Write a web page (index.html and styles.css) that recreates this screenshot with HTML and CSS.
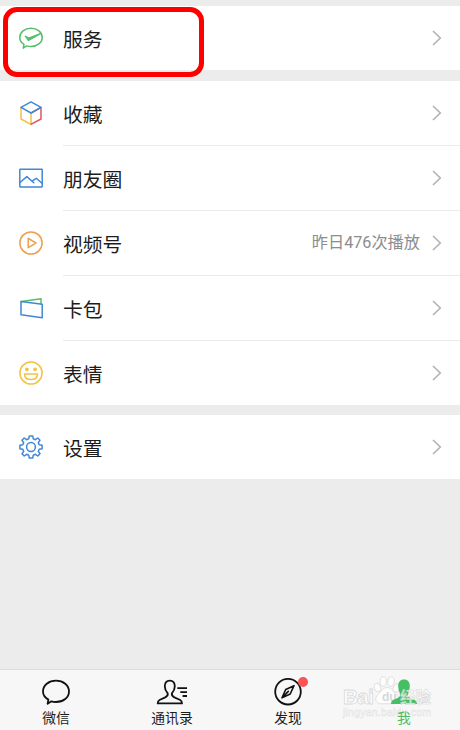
FILE: index.html
```
<!DOCTYPE html>
<html lang="zh-CN">
<head>
    <meta charset="UTF-8">
    <meta name="viewport" content="width=device-width, initial-scale=1.0">
    <title>我</title>
    <link rel="stylesheet" href="styles.css">
</head>
<body>

    <div class="page">
        <div class="group">
            <div class="row">
                <svg class="icon" viewBox="0 0 24 24" stroke="#57be6a">
                    <path d="M4.2 22.2 L5 18.4 C2.4 16.8 .8 14.2 .8 11.4 C.8 6.2 5.7 2.2 12 2.2 S23.2 6.2 23.2 11.4 S18.2 20.5 12 20.5 C10.5 20.5 9 20.3 7.7 19.9 Z"/>
                    <path d="M6.3 10.2 L9.5 14.6 L22 7.4 L9.8 12.1 Z" fill="#57be6a" stroke-width="1.2"/>
                </svg>
                <span class="label">服务</span>
                <svg class="arrow" viewBox="0 0 10 16"><path d="M1 1 L8.3 8 L1 15"/></svg>
            </div>
            <div class="highlight"></div>
        </div>

        <div class="group">
            <div class="row">
                <svg class="icon" viewBox="0 0 24 24">
                    <path d="M2 6.4 V18 L12 23.4 V12" stroke="#f2c04b"/>
                    <path d="M12.3 23.2 L22 18 V6.4 L12.3 12" stroke="#e4565b"/>
                    <path d="M2 6.4 L12 .9 L22 6.4 L12 12 Z" stroke="#4187d6"/>
                </svg>
                <span class="label">收藏</span>
                <svg class="arrow" viewBox="0 0 10 16"><path d="M1 1 L8.3 8 L1 15"/></svg>
            </div>
            <div class="row">
                <svg class="icon" viewBox="0 0 24 24" stroke="#4187d6">
                    <rect x=".8" y="3.2" width="22.4" height="17.8" rx=".6"/>
                    <path d="M1 16.5 L7.8 10.6 L14.8 16.8 M13 15.2 L17.3 12.3 L23 17.2"/>
                </svg>
                <span class="label">朋友圈</span>
                <svg class="arrow" viewBox="0 0 10 16"><path d="M1 1 L8.3 8 L1 15"/></svg>
            </div>
            <div class="row">
                <svg class="icon" viewBox="0 0 24 24" stroke="#eda04f">
                    <circle cx="12" cy="12" r="11.1"/>
                    <path d="M9.2 7.3 L17 12 L9.2 16.7 Z"/>
                </svg>
                <span class="label">视频号</span>
                <span class="note">昨日476次播放</span>
                <svg class="arrow" viewBox="0 0 10 16"><path d="M1 1 L8.3 8 L1 15"/></svg>
            </div>
            <div class="row">
                <svg class="icon" viewBox="0 0 24 24">
                    <path d="M2.2 5.4 L22 2.8 V8" stroke="#57be6a"/>
                    <path d="M2 5.6 L23.2 8.2 V21.8 L2 18.8 Z" stroke="#4187d6"/>
                </svg>
                <span class="label">卡包</span>
                <svg class="arrow" viewBox="0 0 10 16"><path d="M1 1 L8.3 8 L1 15"/></svg>
            </div>
            <div class="row">
                <svg class="icon" viewBox="0 0 24 24" stroke="#f0c445">
                    <circle cx="12" cy="12" r="11.1"/>
                    <circle cx="7.9" cy="8.3" r="1.9" fill="#f0c445" stroke="none"/>
                    <circle cx="16.1" cy="8.3" r="1.9" fill="#f0c445" stroke="none"/>
                    <path d="M5.4 12.9 H18.6 C18.4 16.6 15.7 18.6 12 18.6 S5.6 16.6 5.4 12.9 Z"/>
                </svg>
                <span class="label">表情</span>
                <svg class="arrow" viewBox="0 0 10 16"><path d="M1 1 L8.3 8 L1 15"/></svg>
            </div>
        </div>

        <div class="group">
            <div class="row">
                <svg class="icon" viewBox="0 0 24 24" stroke="#4187d6">
                    <circle cx="12" cy="12" r="4.4"/>
                    <path d="M10.3 .9 H13.7 L14.3 3.8 L16.4 4.7 L18.8 3 L21 5.2 L19.3 7.6 L20.2 9.7 L23.1 10.3 V13.7 L20.2 14.3 L19.3 16.4 L21 18.8 L18.8 21 L16.4 19.3 L14.3 20.2 L13.7 23.1 H10.3 L9.7 20.2 L7.6 19.3 L5.2 21 L3 18.8 L4.7 16.4 L3.8 14.3 L.9 13.7 V10.3 L3.8 9.7 L4.7 7.6 L3 5.2 L5.2 3 L7.6 4.7 L9.7 3.8 Z"/>
                </svg>
                <span class="label">设置</span>
                <svg class="arrow" viewBox="0 0 10 16"><path d="M1 1 L8.3 8 L1 15"/></svg>
            </div>
        </div>

        <div class="tabbar">
            <!-- watermark sits under the tabs, only its last two characters lie over the icon -->
            <svg class="watermark" viewBox="0 0 96 48">
                <text class="url" x="2" y="41.5" textLength="88">jingyan.baidu.com</text>
                <text class="brand" x="2" y="29.8" textLength="31">Bai</text>
                <ellipse cx="36.5" cy="13.6" rx="3.2" ry="4.4" transform="rotate(-15 36.5 13.6)"/>
                <ellipse cx="42.3" cy="7.4" rx="3.2" ry="4.8"/>
                <ellipse cx="50" cy="7.6" rx="3.2" ry="4.8" transform="rotate(8 50 7.6)"/>
                <ellipse cx="55.4" cy="14" rx="3.2" ry="4.4" transform="rotate(18 55.4 14)"/>
                <path d="M46 13.5 C41.5 13.5 40.5 17.5 37.5 20 C33 23.5 34 29.8 39.5 29.8 H53 C58.5 29.8 59.5 24 55 20 C51.5 17 50.5 13.5 46 13.5 Z"/>
                <text class="du" x="41" y="27">du</text>
            </svg>
            <div class="tab">
                <svg class="tab-icon" viewBox="0 0 32 28">
                    <path d="M7.6 25.7 L8.4 21.6 C5 19.6 3 16.7 3 13.4 C3 7.2 8.7 2.7 16 2.7 S29 7.2 29 13.4 S23.3 24 16 24 C14.3 24 12.8 23.8 11.4 23.3 Z"/>
                </svg>
                <span>微信</span>
            </div>
            <div class="tab">
                <svg class="tab-icon" viewBox="0 0 32 28">
                    <path d="M13.8 2.6 C10.2 2.6 8.8 5.2 8.8 8.2 C8.8 11.2 10 13.4 11.6 15.2 C12.4 17.2 11.5 18.2 9.2 19.4 L3.5 22 C2 22.8 1.7 23.8 1.7 25.4 H26 C26 23.8 25.6 22.8 24.2 22 L18.4 19.4 C16.1 18.2 15.2 17.2 16 15.2 C17.6 13.4 18.8 11.2 18.8 8.2 C18.8 5.2 17.4 2.6 13.8 2.6 Z"/>
                    <path d="M21.3 10.1 H31 M24.3 14.1 H31 M26.6 18 H31"/>
                </svg>
                <span>通讯录</span>
            </div>
            <div class="tab">
                <svg class="tab-icon" viewBox="0 0 32 28">
                    <circle cx="16" cy="13.7" r="12.8"/>
                    <path d="M22 7.7 L18.2 16 L10 19.9 L13.7 11.5 Z M10 19.9 L16.8 12.9" stroke-width="1.6"/>
                </svg>
                <i class="dot"></i>
                <span>发现</span>
            </div>
            <div class="tab active">
                <svg class="tab-icon" viewBox="0 0 32 28">
                    <path d="M16 1.6 C12.2 1.6 10.2 4.2 10.2 7.8 C10.2 11 11.2 13.6 11.8 15.4 C12.2 17.4 12 18.5 10.5 19.4 L5.3 22 C3.6 22.8 3 24 3 26 H29 C29 24 28.4 22.8 26.7 22 L21.5 19.4 C20 18.5 19.8 17.4 20.2 15.4 C20.8 13.6 21.8 11 21.8 7.8 C21.8 4.2 19.8 1.6 16 1.6 Z"/>
                </svg>
                <span>我</span>
            </div>
            <svg class="watermark" viewBox="0 0 96 48">
                <text class="cn" x="59" y="28.5" textLength="31">经验</text>
            </svg>
        </div>
    </div>

</body>
</html>
```
FILE: styles.css
```
body {
    margin: 0;
    font-family: "Noto Sans CJK SC", sans-serif;
    background: #ececec;
    color: #1c1c1c;
}

.page {
    display: flex;
    flex-direction: column;
    height: 730px;
    padding-top: 6px;
    box-sizing: border-box;
    overflow: hidden;
}

.group {
    position: relative;
    background: white;
    margin-bottom: 10px;
}

.group:first-child {
    margin-bottom: 11px;
}

.row {
    display: flex;
    align-items: center;
    height: 64px;
    padding: 0 18px 0 19px;
    background: white;
}

/* divider starts under the label, not under the icon */
.row:not(:last-child) {
    border-bottom: 1px solid #ebebeb;
    border-image: linear-gradient(to right, white 64px, #ebebeb 64px) 1;
}

.group:first-child .row {
    border: none;
}

.icon {
    width: 24px;
    height: 24px;
    margin-right: 20px;
    fill: none;
    stroke-width: 1.5;
    stroke-linejoin: round;
    stroke-linecap: round;
}

.label {
    flex: 1;
    font-size: 19.8px;
    line-height: 28px;
    padding-top: 1px;
}

.note {
    font-family: Roboto, "Noto Sans CJK SC", sans-serif;
    font-size: 16.2px;
    line-height: 24px;
    color: #8d8d8d;
    margin-right: 12px;
}

.arrow {
    width: 10px;
    height: 16px;
    fill: none;
    stroke: #b2b2b2;
    stroke-width: 1.6;
}

.highlight {
    position: absolute;
    left: 3px;
    top: 1px;
    width: 191px;
    height: 60px;
    border: 5px solid #fe0000;
    border-radius: 14px;
    z-index: 1;
}

.tabbar {
    position: relative;
    display: flex;
    height: 60px;
    margin: auto -2px 0;
    border-top: 1px solid #dcdcdc;
    background: #f7f7f7;
}

.tab {
    position: relative;
    flex: 1;
    display: flex;
    flex-direction: column;
    align-items: center;
    padding-top: 8px;
    font-size: 13.8px;
    line-height: 18px;
}

.tab-icon {
    width: 32px;
    height: 28px;
    margin-bottom: 2px;
    fill: none;
    stroke: #111;
    stroke-width: 1.8;
    stroke-linejoin: round;
}

.active {
    color: #4dbe68;
}

.active .tab-icon {
    fill: #46bf63;
    stroke: none;
}

.dot {
    position: absolute;
    left: 68px;
    top: 7px;
    width: 10px;
    height: 10px;
    border-radius: 50%;
    background: #fa5455;
}

.watermark {
    position: absolute;
    left: 343px;
    top: 4px;
    width: 96px;
    height: 48px;
    font-family: "Liberation Sans", "Noto Sans CJK SC", sans-serif;
    fill: #fdfdfd;
    stroke: #d9d9d9;
    stroke-width: 0.8;
}

.brand {
    font-size: 21px;
    font-weight: bold;
}

.du {
    font-size: 12px;
    font-weight: bold;
    fill: #d6d6d6;
    stroke: none;
}

.cn {
    font-size: 15.5px;
    font-weight: bold;
    fill: rgba(255, 255, 255, 0.7);
    stroke: rgba(190, 190, 190, 0.6);
    stroke-width: 0.6;
}

.url {
    font-size: 10.5px;
    stroke: #e2e2e2;
    stroke-width: 0.5;
}
```
